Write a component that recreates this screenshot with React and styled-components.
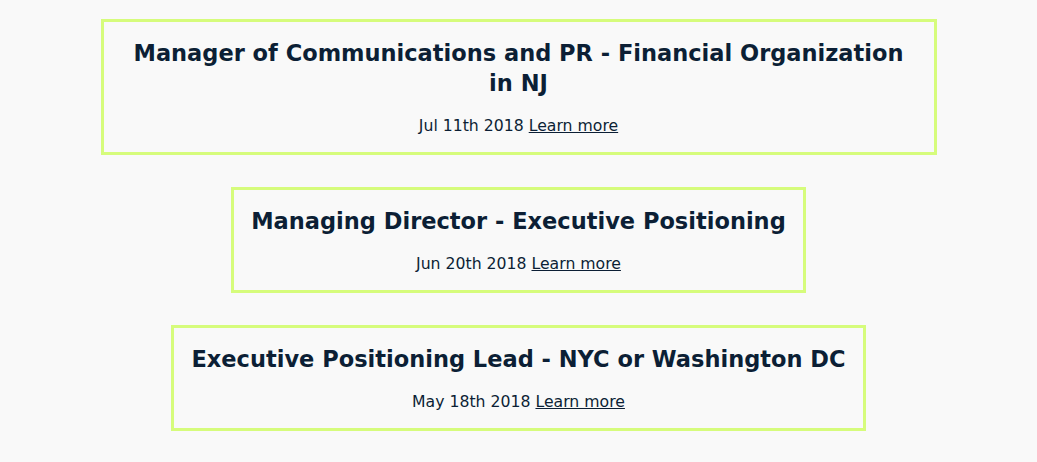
import React from "react";
import styled, { createGlobalStyle } from "styled-components";

const Global = createGlobalStyle`
  html, body { margin: 0; padding: 0; background: #f9f9f9; }
  body { font-family: "DejaVu Sans", "Open Sans", sans-serif; color: #0c1f35; }
`;

const List = styled.div`
  display: flex;
  flex-direction: column;
  align-items: center;
  gap: 32px;
  padding: 19px 16px 40px;
`;

const Card = styled.article`
  box-sizing: border-box;
  max-width: 836px;
  border: 3px solid #d6fc7c;
  padding: 16px 17px 16px;
  text-align: center;
`;

const Title = styled.h2`
  margin: 0;
  font-size: 22.5px;
  line-height: 30px;
  font-weight: 700;
  color: #0c1f35;
`;

const Meta = styled.p`
  margin: 18px 0 0;
  font-size: 15.7px;
  line-height: 20px;
  color: #0c1f35;
`;

const Link = styled.a`
  color: #0c1f35;
  text-decoration: underline;
`;

const jobs = [
  { title: "Manager of Communications and PR - Financial Organization in NJ", date: "Jul 11th 2018" },
  { title: "Managing Director - Executive Positioning", date: "Jun 20th 2018" },
  { title: "Executive Positioning Lead - NYC or Washington DC", date: "May 18th 2018" },
  { title: "Senior Communications Director", date: "May 2nd 2018" },
];

export default function App() {
  return (
    <>
      <Global />
      <List>
        {jobs.map((j) => (
          <Card key={j.title}>
            <Title>{j.title}</Title>
            <Meta>
              {j.date} <Link href="#">Learn more</Link>
            </Meta>
          </Card>
        ))}
      </List>
    </>
  );
}
